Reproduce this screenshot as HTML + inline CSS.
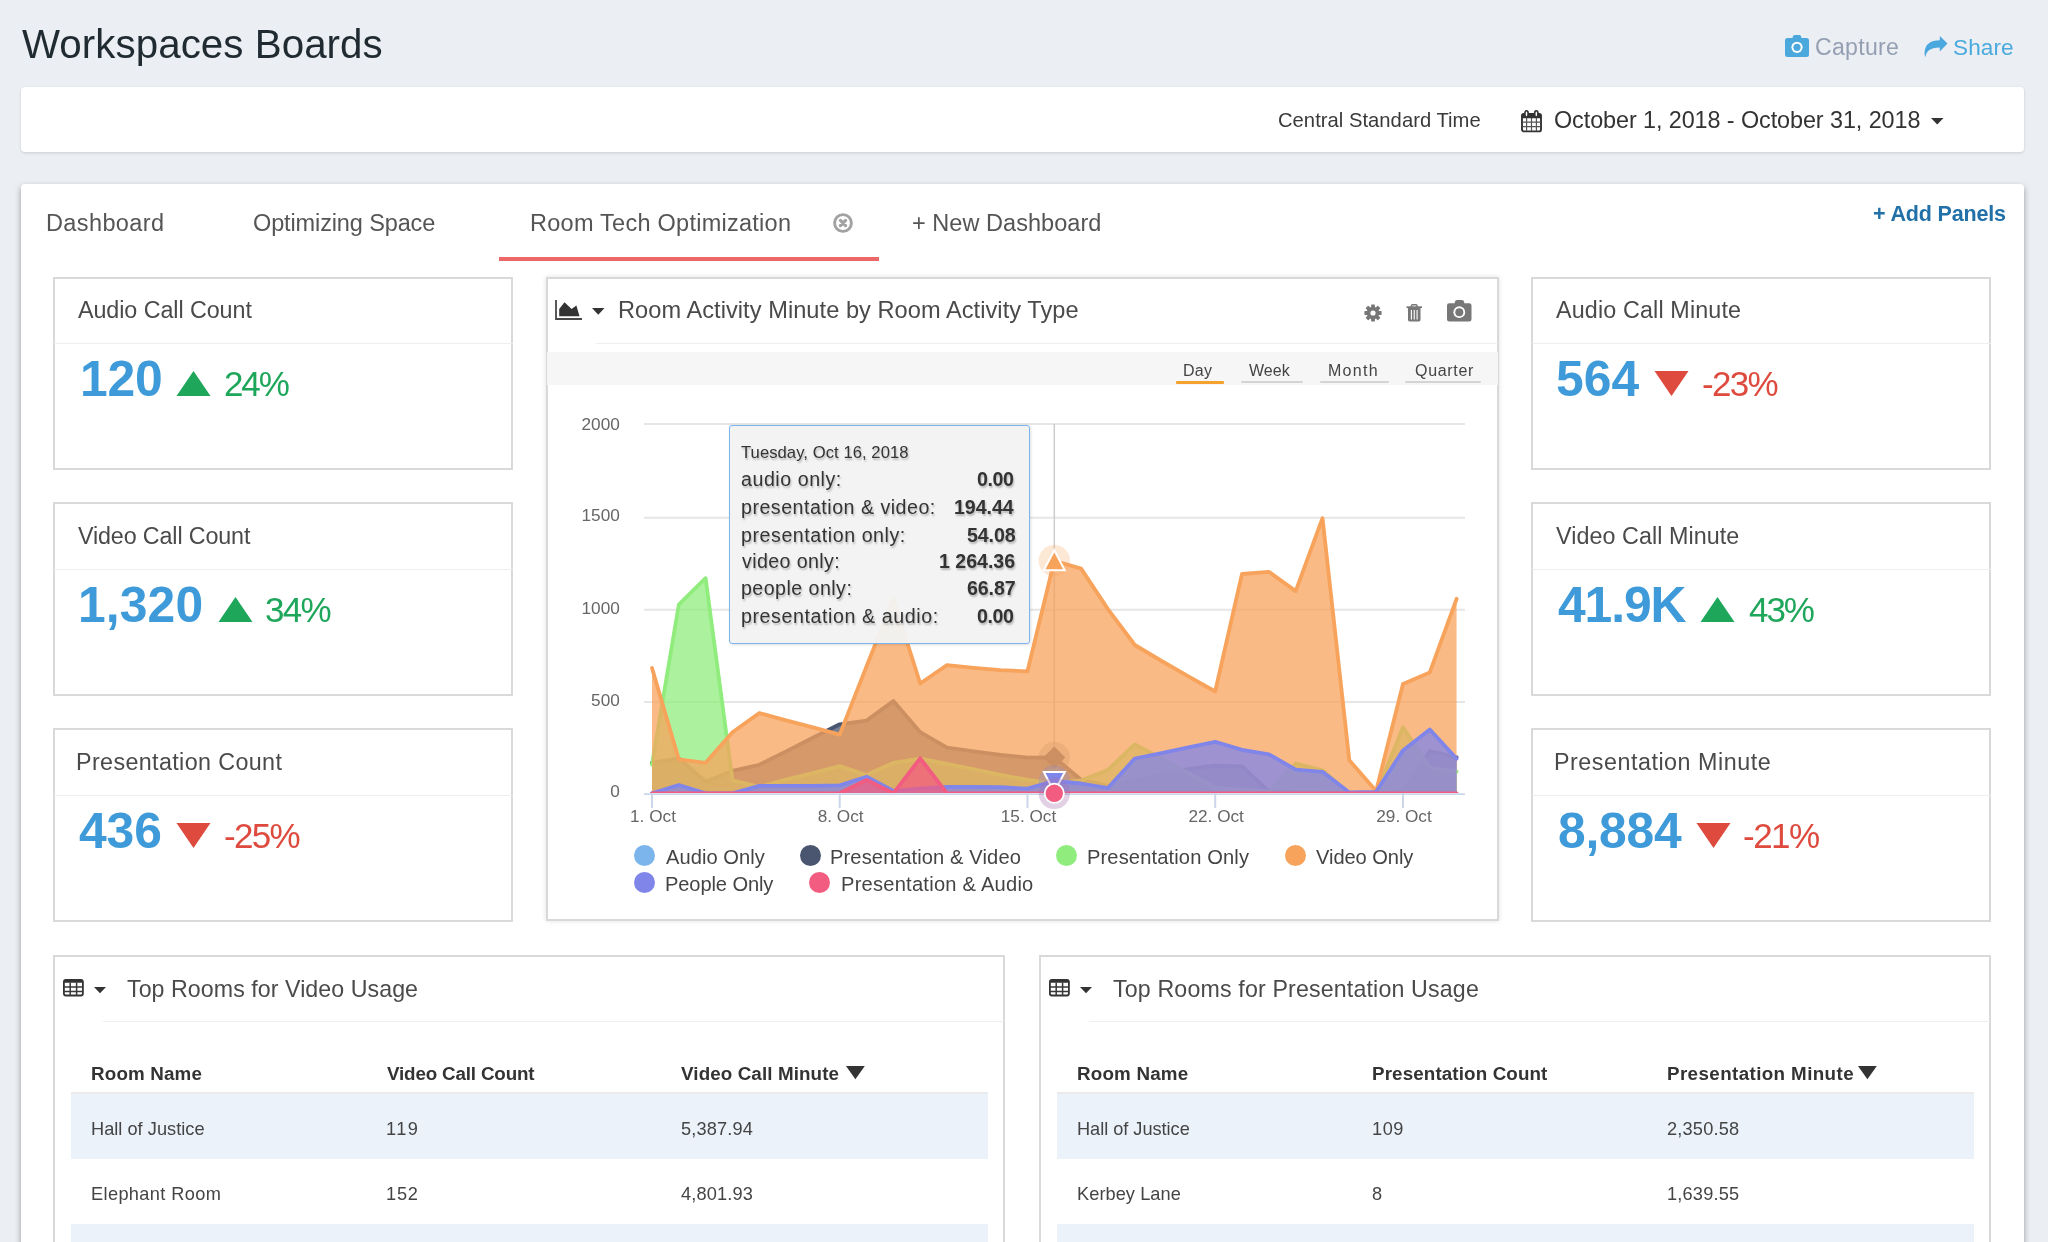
<!DOCTYPE html><html><head><meta charset="utf-8"><title>Workspaces Boards</title>
<style>
html,body{margin:0;padding:0;}
body{width:2048px;height:1242px;overflow:hidden;background:#ebeef3;position:relative;font-family:"Liberation Sans",sans-serif;}
.t{position:absolute;white-space:nowrap;will-change:transform;}
.b{position:absolute;box-sizing:border-box;}
svg{position:absolute;overflow:visible;}
</style></head><body>

<div class="t " style="left:22.10px;top:24.68px;font-size:40.3px;line-height:40.3px;color:#1f2b31;letter-spacing:0.053px;">Workspaces Boards</div>
<svg style="left:1785px;top:35px" width="24" height="22" viewBox="0 0 24 22">
<path d="M8 1.2 Q8.5 0 10 0 H14 Q15.5 0 16 1.2 L16.6 3 H21.5 Q24 3 24 5.5 V19.5 Q24 22 21.5 22 H2.5 Q0 22 0 19.5 V5.5 Q0 3 2.5 3 H7.4 Z" fill="#4aa8dc"/>
<circle cx="12" cy="12.3" r="5.6" fill="#fff"/><circle cx="12" cy="12.3" r="3.6" fill="#4aa8dc"/></svg>
<div class="t " style="left:1814.94px;top:35.52px;font-size:23.1px;line-height:23.1px;color:#959fb2;letter-spacing:0.295px;">Capture</div>
<svg style="left:1924px;top:36px" width="24" height="21" viewBox="0 0 24 21">
<path d="M23.5 7.6 L15.8 0 V4.3 C6 4.3 1 8.6 0.6 16.5 C0.5 18.5 1 20 1.6 21 C2 16 5.5 11.6 15.8 11.6 V15.6 Z" fill="#4aa8de"/></svg>
<div class="t " style="left:1953.20px;top:36.88px;font-size:22.6px;line-height:22.6px;color:#4aaade;letter-spacing:0.075px;">Share</div>
<div class="b" style="left:21px;top:87px;width:2003px;height:64.5px;background:#fff;border-radius:4px;box-shadow:0 1px 3px rgba(0,0,0,0.14);"></div>
<div class="t " style="left:1278.48px;top:110.18px;font-size:20.2px;line-height:20.2px;color:#3a3a3a;letter-spacing:0.034px;">Central Standard Time</div>
<svg style="left:1521px;top:109.5px" width="22" height="24" viewBox="0 0 22 24">
<rect x="1" y="3.9" width="19" height="17.5" rx="2" fill="none" stroke="#333" stroke-width="1.9"/>
<rect x="0.5" y="3.4" width="20" height="4.8" rx="1.6" fill="#333"/>
<path d="M5.6 8 V21 M10.5 8 V21 M15.4 8 V21 M1.5 12.2 H19.5 M1.5 16.7 H19.5" stroke="#555" stroke-width="1.2"/>
<ellipse cx="5.5" cy="3.5" rx="2.5" ry="3.4" fill="#333"/><ellipse cx="15.3" cy="3.5" rx="2.5" ry="3.4" fill="#333"/>
<ellipse cx="5.5" cy="3.9" rx="0.8" ry="2.3" fill="#fff"/><ellipse cx="15.3" cy="3.9" rx="0.8" ry="2.3" fill="#fff"/></svg>
<div class="t " style="left:1553.84px;top:108.63px;font-size:23.4px;line-height:23.4px;color:#333;letter-spacing:-0.087px;">October 1, 2018 - October 31, 2018</div>
<svg style="left:1931px;top:117.5px" width="13" height="8" viewBox="0 0 13 8"><path d="M0 0 H12.5 L6.25 6.6 Z" fill="#333"/></svg>
<div class="b" style="left:21px;top:184px;width:2003px;height:1116px;background:#fff;border-radius:4px;box-shadow:0 3px 6px rgba(0,0,0,0.36);"></div>
<div class="t " style="left:46.40px;top:212.04px;font-size:23.5px;line-height:23.5px;color:#555;letter-spacing:0.384px;">Dashboard</div>
<div class="t " style="left:253.20px;top:212.04px;font-size:23.5px;line-height:23.5px;color:#555;letter-spacing:-0.124px;">Optimizing Space</div>
<div class="t " style="left:530.32px;top:212.04px;font-size:23.5px;line-height:23.5px;color:#555;letter-spacing:0.258px;">Room Tech Optimization</div>
<svg style="left:832px;top:212px" width="22" height="22" viewBox="0 0 22 22">
<circle cx="11" cy="11" r="8.4" fill="none" stroke="#a2a2a2" stroke-width="2.9"/>
<path d="M8.4 8.4 L13.6 13.6 M13.6 8.4 L8.4 13.6" stroke="#a2a2a2" stroke-width="3.2" stroke-linecap="round"/></svg>
<div class="t " style="left:911.94px;top:212.04px;font-size:23.5px;line-height:23.5px;color:#555;letter-spacing:0.043px;">+ New Dashboard</div>
<div class="b" style="left:499px;top:257px;width:379.5px;height:4.300000000000011px;background:#ec6868;"></div>
<div class="t " style="left:1872.84px;top:203.96px;font-size:21.5px;line-height:21.5px;color:#2270a8;font-weight:700;letter-spacing:-0.159px;">+ Add Panels</div>
<div class="b" style="left:53px;top:276.6px;width:460.20000000000005px;height:193.3px;border:2px solid #d9d9d9;background:#fff;"></div>
<div class="b" style="left:54px;top:343px;width:459px;height:1px;background:#eeeeee;"></div>
<div class="t " style="left:77.64px;top:299.21px;font-size:23.3px;line-height:23.3px;color:#4a4a4a;letter-spacing:-0.064px;">Audio Call Count</div>
<div class="t " style="left:79.70px;top:354.85px;font-size:49.8px;line-height:49.8px;color:#3e9ad8;font-weight:700;letter-spacing:-0.15px;">120</div>
<svg style="left:176px;top:371px" width="35" height="26" viewBox="0 0 35 26"><path d="M17.5 0 L34.5 25 H0.5 Z" fill="#1ea65b"/></svg>
<div class="t " style="left:223.94px;top:366.21px;font-size:35.0px;line-height:35.0px;color:#1ea65b;letter-spacing:-2.095px;">24%</div>
<div class="b" style="left:53px;top:502.3px;width:460.20000000000005px;height:193.3px;border:2px solid #d9d9d9;background:#fff;"></div>
<div class="b" style="left:54px;top:569px;width:459px;height:1px;background:#eeeeee;"></div>
<div class="t " style="left:77.64px;top:525.21px;font-size:23.3px;line-height:23.3px;color:#4a4a4a;letter-spacing:-0.134px;">Video Call Count</div>
<div class="t " style="left:78.26px;top:580.85px;font-size:49.8px;line-height:49.8px;color:#3e9ad8;font-weight:700;letter-spacing:0.12px;">1,320</div>
<svg style="left:218px;top:597px" width="35" height="26" viewBox="0 0 35 26"><path d="M17.5 0 L34.5 25 H0.5 Z" fill="#1ea65b"/></svg>
<div class="t " style="left:265.12px;top:592.21px;font-size:35.0px;line-height:35.0px;color:#1ea65b;letter-spacing:-1.685px;">34%</div>
<div class="b" style="left:53px;top:728.3px;width:460.20000000000005px;height:193.29999999999995px;border:2px solid #d9d9d9;background:#fff;"></div>
<div class="b" style="left:54px;top:795px;width:459px;height:1px;background:#eeeeee;"></div>
<div class="t " style="left:76.04px;top:751.21px;font-size:23.3px;line-height:23.3px;color:#4a4a4a;letter-spacing:0.378px;">Presentation Count</div>
<div class="t " style="left:79.46px;top:806.85px;font-size:49.8px;line-height:49.8px;color:#3e9ad8;font-weight:700;letter-spacing:-0.07px;">436</div>
<svg style="left:176px;top:823px" width="35" height="26" viewBox="0 0 35 26"><path d="M0.5 0 H34.5 L17.5 25 Z" fill="#de4a3e"/></svg>
<div class="t " style="left:224.20px;top:818.21px;font-size:35.0px;line-height:35.0px;color:#de4a3e;letter-spacing:-1.7px;">-25%</div>
<div class="b" style="left:1531px;top:276.6px;width:460.20000000000005px;height:193.3px;border:2px solid #d9d9d9;background:#fff;"></div>
<div class="b" style="left:1532px;top:343px;width:459px;height:1px;background:#eeeeee;"></div>
<div class="t " style="left:1555.64px;top:299.21px;font-size:23.3px;line-height:23.3px;color:#4a4a4a;letter-spacing:0.155px;">Audio Call Minute</div>
<div class="t " style="left:1556.40px;top:354.85px;font-size:49.8px;line-height:49.8px;color:#3e9ad8;font-weight:700;letter-spacing:0.06px;">564</div>
<svg style="left:1654px;top:371px" width="35" height="26" viewBox="0 0 35 26"><path d="M0.5 0 H34.5 L17.5 25 Z" fill="#de4a3e"/></svg>
<div class="t " style="left:1702.20px;top:366.21px;font-size:35.0px;line-height:35.0px;color:#de4a3e;letter-spacing:-1.7px;">-23%</div>
<div class="b" style="left:1531px;top:502.3px;width:460.20000000000005px;height:193.3px;border:2px solid #d9d9d9;background:#fff;"></div>
<div class="b" style="left:1532px;top:569px;width:459px;height:1px;background:#eeeeee;"></div>
<div class="t " style="left:1555.64px;top:525.21px;font-size:23.3px;line-height:23.3px;color:#4a4a4a;letter-spacing:0.066px;">Video Call Minute</div>
<div class="t " style="left:1558.00px;top:580.85px;font-size:49.8px;line-height:49.8px;color:#3e9ad8;font-weight:700;letter-spacing:-1.075px;">41.9K</div>
<svg style="left:1700px;top:597px" width="35" height="26" viewBox="0 0 35 26"><path d="M17.5 0 L34.5 25 H0.5 Z" fill="#1ea65b"/></svg>
<div class="t " style="left:1748.54px;top:592.21px;font-size:35.0px;line-height:35.0px;color:#1ea65b;letter-spacing:-2.085px;">43%</div>
<div class="b" style="left:1531px;top:728.3px;width:460.20000000000005px;height:193.29999999999995px;border:2px solid #d9d9d9;background:#fff;"></div>
<div class="b" style="left:1532px;top:795px;width:459px;height:1px;background:#eeeeee;"></div>
<div class="t " style="left:1554.04px;top:751.21px;font-size:23.3px;line-height:23.3px;color:#4a4a4a;letter-spacing:0.523px;">Presentation Minute</div>
<div class="t " style="left:1557.56px;top:806.85px;font-size:49.8px;line-height:49.8px;color:#3e9ad8;font-weight:700;letter-spacing:-0.245px;">8,884</div>
<svg style="left:1696px;top:823px" width="35" height="26" viewBox="0 0 35 26"><path d="M0.5 0 H34.5 L17.5 25 Z" fill="#de4a3e"/></svg>
<div class="t " style="left:1742.94px;top:818.21px;font-size:35.0px;line-height:35.0px;color:#de4a3e;letter-spacing:-1.52px;">-21%</div>
<div class="b" style="left:545.8px;top:276.6px;width:952.8px;height:644.6999999999999px;border:2px solid #d9d9d9;background:#fff;box-shadow:0 0 5px rgba(0,0,0,0.12);"></div>
<svg style="left:555px;top:300px" width="27" height="20" viewBox="0 0 27 20">
<path d="M1 0 V19 H27" fill="none" stroke="#484848" stroke-width="1.8"/>
<path d="M4.2 16.2 V9 L9.5 2.3 L16.6 9 L21.4 5.5 L24.5 16.2 Z" fill="#333"/></svg>
<svg style="left:591.5px;top:308px" width="13" height="8" viewBox="0 0 13 8"><path d="M0 0 H12.5 L6.25 6.8 Z" fill="#333"/></svg>
<div class="t " style="left:618.14px;top:299.18px;font-size:23.6px;line-height:23.6px;color:#4a4a4a;letter-spacing:0.051px;">Room Activity Minute by Room Activity Type</div>
<svg style="left:1364px;top:304px" width="18" height="18" viewBox="-9 -9 18 18">
<g fill="#777"><circle r="6.2"/><rect x="-1.9" y="-8.6" width="3.8" height="4" rx="0.6" transform="rotate(0)"/><rect x="-1.9" y="-8.6" width="3.8" height="4" rx="0.6" transform="rotate(45)"/><rect x="-1.9" y="-8.6" width="3.8" height="4" rx="0.6" transform="rotate(90)"/><rect x="-1.9" y="-8.6" width="3.8" height="4" rx="0.6" transform="rotate(135)"/><rect x="-1.9" y="-8.6" width="3.8" height="4" rx="0.6" transform="rotate(180)"/><rect x="-1.9" y="-8.6" width="3.8" height="4" rx="0.6" transform="rotate(225)"/><rect x="-1.9" y="-8.6" width="3.8" height="4" rx="0.6" transform="rotate(270)"/><rect x="-1.9" y="-8.6" width="3.8" height="4" rx="0.6" transform="rotate(315)"/></g><circle r="2.6" fill="#fff"/></svg>
<svg style="left:1406px;top:304px" width="17" height="18" viewBox="0 0 17 18">
<path d="M0.5 3.2 H16 " stroke="#777" stroke-width="1.8"/><path d="M5.5 3 V1.8 Q5.5 0.8 6.5 0.8 H10 Q11 0.8 11 1.8 V3" fill="none" stroke="#777" stroke-width="1.5"/>
<path d="M2 4 H14.5 V15.8 Q14.5 17.4 13 17.4 H3.5 Q2 17.4 2 15.8 Z" fill="#777"/>
<path d="M5.4 6 V15.4 M8.25 6 V15.4 M11.1 6 V15.4" stroke="#fff" stroke-width="1.1"/></svg>
<svg style="left:1447px;top:300px" width="25" height="22" viewBox="0 0 25 22">
<path d="M8 1.6 Q8.3 0 10 0 H15 Q16.7 0 17 1.6 L17.3 3.2 H22.3 Q24.5 3.2 24.5 5.4 V19.2 Q24.5 21.4 22.3 21.4 H2.2 Q0 21.4 0 19.2 V5.4 Q0 3.2 2.2 3.2 H7.7 Z" fill="#777"/>
<circle cx="12.3" cy="12.2" r="5.9" fill="#fff"/><circle cx="12.3" cy="12.2" r="4.0" fill="#777"/></svg>
<div class="b" style="left:596px;top:342.5px;width:902px;height:1.0px;background:#eeeeee;"></div>
<div class="b" style="left:547.4px;top:352px;width:950.1999999999999px;height:32.5px;background:#f6f6f6;"></div>
<div class="t " style="left:1183.48px;top:363.03px;font-size:16.0px;line-height:16.0px;color:#444;letter-spacing:0.265px;">Day</div>
<div class="b" style="left:1175.8px;top:381px;width:48.40000000000009px;height:3.1999999999999886px;background:#f5a12d;border-radius:1px;"></div>
<div class="t " style="left:1249.46px;top:363.03px;font-size:16.0px;line-height:16.0px;color:#444;letter-spacing:0.026px;">Week</div>
<div class="b" style="left:1240.6px;top:381px;width:62.600000000000136px;height:1.8000000000000114px;background:#d4d4d4;border-radius:1px;"></div>
<div class="t " style="left:1327.56px;top:363.03px;font-size:16.0px;line-height:16.0px;color:#444;letter-spacing:1.287px;">Month</div>
<div class="b" style="left:1319.6px;top:381px;width:69.30000000000018px;height:1.8000000000000114px;background:#d4d4d4;border-radius:1px;"></div>
<div class="t " style="left:1414.72px;top:363.03px;font-size:16.0px;line-height:16.0px;color:#444;letter-spacing:0.685px;">Quarter</div>
<div class="b" style="left:1405.2px;top:381px;width:75.79999999999995px;height:1.8000000000000114px;background:#d4d4d4;border-radius:1px;"></div>
<svg style="left:0;top:0" width="2048" height="1242" viewBox="0 0 2048 1242">
<path d="M644 424.0 H1465" stroke="#e6e6e6" stroke-width="2"/>
<path d="M644 517.8 H1465" stroke="#e6e6e6" stroke-width="2"/>
<path d="M644 609.7 H1465" stroke="#e6e6e6" stroke-width="2"/>
<path d="M644 701.9 H1465" stroke="#e6e6e6" stroke-width="2"/>
<text x="619.8" y="429.8" font-size="17.2" fill="#666" text-anchor="end" font-family="Liberation Sans">2000</text>
<text x="619.8" y="521.3" font-size="17.2" fill="#666" text-anchor="end" font-family="Liberation Sans">1500</text>
<text x="619.8" y="613.6" font-size="17.2" fill="#666" text-anchor="end" font-family="Liberation Sans">1000</text>
<text x="619.8" y="705.5" font-size="17.2" fill="#666" text-anchor="end" font-family="Liberation Sans">500</text>
<text x="619.8" y="797.3" font-size="17.2" fill="#666" text-anchor="end" font-family="Liberation Sans">0</text>
<defs><clipPath id="pc"><rect x="640" y="380" width="830" height="413.0"/></clipPath></defs>
<path d="M644 794.1 H1465" stroke="#ccd6eb" stroke-width="1.8"/>
<path d="M1054.3 424 V792" stroke="#cccccc" stroke-width="1.5"/>
<g clip-path="url(#pc)"><path d="M652.0 793.3 L652.0 793.3 L678.8 793.3 L705.6 793.3 L732.5 793.3 L759.3 793.3 L786.1 793.3 L812.9 793.3 L839.7 793.3 L866.6 793.3 L893.4 793.3 L920.2 793.3 L947.0 793.3 L973.8 793.3 L1000.7 793.3 L1027.5 793.3 L1054.3 793.3 L1081.1 793.3 L1107.9 793.3 L1134.8 793.3 L1161.6 793.3 L1188.4 793.3 L1215.2 793.3 L1242.0 793.3 L1268.9 793.3 L1295.7 793.3 L1322.5 793.3 L1349.3 793.3 L1376.1 793.3 L1403.0 793.3 L1429.8 793.3 L1456.6 793.3 L1456.6 793.3 Z" fill="#7cb5ec" fill-opacity="0.75"/>
<path d="M652.0 793.3 L678.8 793.3 L705.6 793.3 L732.5 793.3 L759.3 793.3 L786.1 793.3 L812.9 793.3 L839.7 793.3 L866.6 793.3 L893.4 793.3 L920.2 793.3 L947.0 793.3 L973.8 793.3 L1000.7 793.3 L1027.5 793.3 L1054.3 793.3 L1081.1 793.3 L1107.9 793.3 L1134.8 793.3 L1161.6 793.3 L1188.4 793.3 L1215.2 793.3 L1242.0 793.3 L1268.9 793.3 L1295.7 793.3 L1322.5 793.3 L1349.3 793.3 L1376.1 793.3 L1403.0 793.3 L1429.8 793.3 L1456.6 793.3" fill="none" stroke="#7cb5ec" stroke-width="3.8" stroke-linejoin="round" stroke-linecap="round"/></g>
<g clip-path="url(#pc)"><path d="M652.0 793.3 L652.0 762.6 L678.8 758.3 L705.6 781.7 L732.5 770.9 L759.3 764.8 L786.1 751.5 L812.9 737.7 L839.7 724.3 L866.6 720.6 L893.4 701.1 L920.2 732.2 L947.0 747.7 L973.8 751.3 L1000.7 754.8 L1027.5 757.6 L1054.3 757.5 L1081.1 779.7 L1107.9 785.9 L1134.8 780.4 L1161.6 774.9 L1188.4 769.0 L1215.2 765.7 L1242.0 766.3 L1268.9 791.5 L1295.7 792.4 L1322.5 792.4 L1349.3 793.3 L1376.1 793.3 L1403.0 791.5 L1429.8 751.0 L1456.6 757.4 L1456.6 793.3 Z" fill="#4a5670" fill-opacity="0.75"/>
<path d="M652.0 762.6 L678.8 758.3 L705.6 781.7 L732.5 770.9 L759.3 764.8 L786.1 751.5 L812.9 737.7 L839.7 724.3 L866.6 720.6 L893.4 701.1 L920.2 732.2 L947.0 747.7 L973.8 751.3 L1000.7 754.8 L1027.5 757.6 L1054.3 757.5 L1081.1 779.7 L1107.9 785.9 L1134.8 780.4 L1161.6 774.9 L1188.4 769.0 L1215.2 765.7 L1242.0 766.3 L1268.9 791.5 L1295.7 792.4 L1322.5 792.4 L1349.3 793.3 L1376.1 793.3 L1403.0 791.5 L1429.8 751.0 L1456.6 757.4" fill="none" stroke="#4a5670" stroke-width="3.8" stroke-linejoin="round" stroke-linecap="round"/></g>
<circle cx="1054.3" cy="757.5" r="15.7" fill="#4a5670" fill-opacity="0.25"/>
<path d="M1054.3 746.5 L1065.3 757.5 L1054.3 768.5 L1043.3 757.5 Z" fill="#4a5670"/>
<g clip-path="url(#pc)"><path d="M652.0 793.3 L652.0 764.6 L678.8 604.7 L705.6 578.2 L732.5 780.4 L759.3 786.9 L786.1 779.5 L812.9 773.1 L839.7 766.1 L866.6 775.1 L893.4 762.8 L920.2 758.7 L947.0 763.9 L973.8 769.4 L1000.7 774.9 L1027.5 779.9 L1054.3 783.3 L1081.1 780.4 L1107.9 769.9 L1134.8 744.4 L1161.6 758.7 L1188.4 773.1 L1215.2 787.6 L1242.0 789.6 L1268.9 791.5 L1295.7 763.5 L1322.5 770.3 L1349.3 793.3 L1376.1 793.3 L1403.0 727.4 L1429.8 767.7 L1456.6 771.6 L1456.6 793.3 Z" fill="#90ed7d" fill-opacity="0.75"/>
<path d="M652.0 764.6 L678.8 604.7 L705.6 578.2 L732.5 780.4 L759.3 786.9 L786.1 779.5 L812.9 773.1 L839.7 766.1 L866.6 775.1 L893.4 762.8 L920.2 758.7 L947.0 763.9 L973.8 769.4 L1000.7 774.9 L1027.5 779.9 L1054.3 783.3 L1081.1 780.4 L1107.9 769.9 L1134.8 744.4 L1161.6 758.7 L1188.4 773.1 L1215.2 787.6 L1242.0 789.6 L1268.9 791.5 L1295.7 763.5 L1322.5 770.3 L1349.3 793.3 L1376.1 793.3 L1403.0 727.4 L1429.8 767.7 L1456.6 771.6" fill="none" stroke="#90ed7d" stroke-width="3.8" stroke-linejoin="round" stroke-linecap="round"/></g>
<circle cx="1054.3" cy="783.3" r="15.7" fill="#90ed7d" fill-opacity="0.25"/>
<g clip-path="url(#pc)"><path d="M652.0 793.3 L652.0 668.0 L678.8 759.4 L705.6 762.8 L732.5 732.2 L759.3 713.1 L786.1 720.3 L812.9 727.4 L839.7 734.6 L866.6 666.3 L893.4 599.0 L920.2 683.5 L947.0 665.1 L973.8 667.8 L1000.7 670.2 L1027.5 671.3 L1054.3 560.7 L1081.1 568.6 L1107.9 609.1 L1134.8 645.0 L1161.6 661.0 L1188.4 676.3 L1215.2 691.5 L1242.0 574.0 L1268.9 571.8 L1295.7 591.1 L1322.5 518.2 L1349.3 760.2 L1376.1 791.1 L1403.0 684.0 L1429.8 672.4 L1456.6 598.8 L1456.6 793.3 Z" fill="#f7a35c" fill-opacity="0.75"/>
<path d="M652.0 668.0 L678.8 759.4 L705.6 762.8 L732.5 732.2 L759.3 713.1 L786.1 720.3 L812.9 727.4 L839.7 734.6 L866.6 666.3 L893.4 599.0 L920.2 683.5 L947.0 665.1 L973.8 667.8 L1000.7 670.2 L1027.5 671.3 L1054.3 560.7 L1081.1 568.6 L1107.9 609.1 L1134.8 645.0 L1161.6 661.0 L1188.4 676.3 L1215.2 691.5 L1242.0 574.0 L1268.9 571.8 L1295.7 591.1 L1322.5 518.2 L1349.3 760.2 L1376.1 791.1 L1403.0 684.0 L1429.8 672.4 L1456.6 598.8" fill="none" stroke="#f7a35c" stroke-width="3.8" stroke-linejoin="round" stroke-linecap="round"/></g>
<circle cx="1054.3" cy="560.7" r="15.7" fill="#f7a35c" fill-opacity="0.25"/>
<path d="M1054.3 550.2 L1064.8 570.2 L1043.8 570.2 Z" fill="#f7a35c" stroke="#fff" stroke-width="2"/>
<g clip-path="url(#pc)"><path d="M652.0 793.3 L652.0 793.3 L678.8 785.0 L705.6 793.3 L732.5 793.3 L759.3 785.9 L786.1 785.9 L812.9 785.9 L839.7 785.4 L866.6 776.7 L893.4 790.9 L920.2 788.7 L947.0 786.9 L973.8 786.9 L1000.7 787.2 L1027.5 788.7 L1054.3 781.0 L1081.1 783.5 L1107.9 788.0 L1134.8 758.5 L1161.6 753.2 L1188.4 747.3 L1215.2 741.8 L1242.0 749.9 L1268.9 754.3 L1295.7 769.6 L1322.5 771.8 L1349.3 792.4 L1376.1 791.8 L1403.0 750.4 L1429.8 729.5 L1456.6 758.7 L1456.6 793.3 Z" fill="#8085e9" fill-opacity="0.75"/>
<path d="M652.0 793.3 L678.8 785.0 L705.6 793.3 L732.5 793.3 L759.3 785.9 L786.1 785.9 L812.9 785.9 L839.7 785.4 L866.6 776.7 L893.4 790.9 L920.2 788.7 L947.0 786.9 L973.8 786.9 L1000.7 787.2 L1027.5 788.7 L1054.3 781.0 L1081.1 783.5 L1107.9 788.0 L1134.8 758.5 L1161.6 753.2 L1188.4 747.3 L1215.2 741.8 L1242.0 749.9 L1268.9 754.3 L1295.7 769.6 L1322.5 771.8 L1349.3 792.4 L1376.1 791.8 L1403.0 750.4 L1429.8 729.5 L1456.6 758.7" fill="none" stroke="#8085e9" stroke-width="3.8" stroke-linejoin="round" stroke-linecap="round"/></g>
<circle cx="1054.3" cy="781.0" r="15.7" fill="#8085e9" fill-opacity="0.25"/>
<path d="M1043.8 772.0 L1064.8 772.0 L1054.3 792.0 Z" fill="#8085e9" stroke="#fff" stroke-width="2"/>
<g clip-path="url(#pc)"><path d="M652.0 793.3 L652.0 793.3 L678.8 793.3 L705.6 793.3 L732.5 793.3 L759.3 793.3 L786.1 793.3 L812.9 793.3 L839.7 793.3 L866.6 779.9 L893.4 793.3 L920.2 758.3 L947.0 793.3 L973.8 793.3 L1000.7 793.3 L1027.5 793.3 L1054.3 793.3 L1081.1 793.3 L1107.9 793.3 L1134.8 793.3 L1161.6 793.3 L1188.4 793.3 L1215.2 793.3 L1242.0 793.3 L1268.9 793.3 L1295.7 793.3 L1322.5 793.3 L1349.3 793.3 L1376.1 793.3 L1403.0 793.3 L1429.8 793.3 L1456.6 793.3 L1456.6 793.3 Z" fill="#f15c80" fill-opacity="0.75"/>
<path d="M652.0 793.3 L678.8 793.3 L705.6 793.3 L732.5 793.3 L759.3 793.3 L786.1 793.3 L812.9 793.3 L839.7 793.3 L866.6 779.9 L893.4 793.3 L920.2 758.3 L947.0 793.3 L973.8 793.3 L1000.7 793.3 L1027.5 793.3 L1054.3 793.3 L1081.1 793.3 L1107.9 793.3 L1134.8 793.3 L1161.6 793.3 L1188.4 793.3 L1215.2 793.3 L1242.0 793.3 L1268.9 793.3 L1295.7 793.3 L1322.5 793.3 L1349.3 793.3 L1376.1 793.3 L1403.0 793.3 L1429.8 793.3 L1456.6 793.3" fill="none" stroke="#f15c80" stroke-width="3.8" stroke-linejoin="round" stroke-linecap="round"/></g>
<circle cx="1054.3" cy="793.3" r="15.7" fill="#a870b0" fill-opacity="0.33"/>
<circle cx="1054.3" cy="793.3" r="9.6" fill="#f15c80" stroke="#fff" stroke-width="1.8"/>
<path d="M652.0 793 V808" stroke="#ccd6eb" stroke-width="2"/>
<text x="653.0" y="822" font-size="17.2" fill="#666" text-anchor="middle" font-family="Liberation Sans">1. Oct</text>
<path d="M839.7 793 V808" stroke="#ccd6eb" stroke-width="2"/>
<text x="840.7" y="822" font-size="17.2" fill="#666" text-anchor="middle" font-family="Liberation Sans">8. Oct</text>
<path d="M1027.5 793 V808" stroke="#ccd6eb" stroke-width="2"/>
<text x="1028.5" y="822" font-size="17.2" fill="#666" text-anchor="middle" font-family="Liberation Sans">15. Oct</text>
<path d="M1215.2 793 V808" stroke="#ccd6eb" stroke-width="2"/>
<text x="1216.2" y="822" font-size="17.2" fill="#666" text-anchor="middle" font-family="Liberation Sans">22. Oct</text>
<path d="M1403.0 793 V808" stroke="#ccd6eb" stroke-width="2"/>
<text x="1404.0" y="822" font-size="17.2" fill="#666" text-anchor="middle" font-family="Liberation Sans">29. Oct</text>
</svg>
<div class="b" style="left:633.8px;top:845.3px;width:21px;height:21px;border-radius:50%;background:#7cb5ec;"></div>
<div class="t " style="left:665.82px;top:847.34px;font-size:20.1px;line-height:20.1px;color:#444;letter-spacing:0.057px;">Audio Only</div>
<div class="b" style="left:799.5px;top:845.3px;width:21px;height:21px;border-radius:50%;background:#4a5670;"></div>
<div class="t " style="left:830.12px;top:847.34px;font-size:20.1px;line-height:20.1px;color:#444;letter-spacing:0.131px;">Presentation &amp; Video</div>
<div class="b" style="left:1056.2px;top:845.3px;width:21px;height:21px;border-radius:50%;background:#90ed7d;"></div>
<div class="t " style="left:1087.48px;top:847.34px;font-size:20.1px;line-height:20.1px;color:#444;letter-spacing:0.139px;">Presentation Only</div>
<div class="b" style="left:1284.5px;top:845.3px;width:21px;height:21px;border-radius:50%;background:#f7a35c;"></div>
<div class="t " style="left:1316.18px;top:847.34px;font-size:20.1px;line-height:20.1px;color:#444;letter-spacing:-0.058px;">Video Only</div>
<div class="b" style="left:633.8px;top:872.3px;width:21px;height:21px;border-radius:50%;background:#8085e9;"></div>
<div class="t " style="left:665.20px;top:874.34px;font-size:20.1px;line-height:20.1px;color:#444;letter-spacing:-0.106px;">People Only</div>
<div class="b" style="left:808.7px;top:872.3px;width:21px;height:21px;border-radius:50%;background:#f15c80;"></div>
<div class="t " style="left:840.56px;top:874.34px;font-size:20.1px;line-height:20.1px;color:#444;letter-spacing:0.242px;">Presentation &amp; Audio</div>
<div class="b" style="left:728.5px;top:424.5px;width:301.5px;height:219.0px;border:1.6px solid #7cb5ec;border-radius:3px;background:rgba(243,243,243,0.96);box-shadow:1px 1px 3px rgba(0,0,0,0.12);"></div>
<div class="t " style="left:741.28px;top:445.24px;font-size:16.6px;line-height:16.6px;color:#333;letter-spacing:0.072px;text-shadow:1px 2px 2px rgba(0,0,0,0.25);">Tuesday, Oct 16, 2018</div>
<div class="t " style="left:741.38px;top:470.26px;font-size:19.6px;line-height:19.6px;color:#333;letter-spacing:0.552px;text-shadow:1px 2px 2px rgba(0,0,0,0.25);">audio only:</div>
<div class="t " style="left:977.46px;top:470.26px;font-size:19.6px;line-height:19.6px;color:#333;font-weight:700;letter-spacing:-0.408px;text-shadow:1px 2px 2px rgba(0,0,0,0.25);">0.00</div>
<div class="t " style="left:741.38px;top:497.91px;font-size:19.6px;line-height:19.6px;color:#333;letter-spacing:0.508px;text-shadow:1px 2px 2px rgba(0,0,0,0.25);">presentation &amp; video:</div>
<div class="t " style="left:953.94px;top:497.91px;font-size:19.6px;line-height:19.6px;color:#333;font-weight:700;letter-spacing:-0.062px;text-shadow:1px 2px 2px rgba(0,0,0,0.25);">194.44</div>
<div class="t " style="left:741.38px;top:525.56px;font-size:19.6px;line-height:19.6px;color:#333;letter-spacing:0.565px;text-shadow:1px 2px 2px rgba(0,0,0,0.25);">presentation only:</div>
<div class="t " style="left:966.54px;top:525.56px;font-size:19.6px;line-height:19.6px;color:#333;font-weight:700;letter-spacing:-0.102px;text-shadow:1px 2px 2px rgba(0,0,0,0.25);">54.08</div>
<div class="t " style="left:742.18px;top:552.41px;font-size:19.6px;line-height:19.6px;color:#333;letter-spacing:0.4px;text-shadow:1px 2px 2px rgba(0,0,0,0.25);">video only:</div>
<div class="t " style="left:939.02px;top:552.41px;font-size:19.6px;line-height:19.6px;color:#333;font-weight:700;letter-spacing:-0.018px;text-shadow:1px 2px 2px rgba(0,0,0,0.25);">1 264.36</div>
<div class="t " style="left:741.38px;top:579.26px;font-size:19.6px;line-height:19.6px;color:#333;letter-spacing:0.469px;text-shadow:1px 2px 2px rgba(0,0,0,0.25);">people only:</div>
<div class="t " style="left:966.54px;top:579.26px;font-size:19.6px;line-height:19.6px;color:#333;font-weight:700;letter-spacing:-0.102px;text-shadow:1px 2px 2px rgba(0,0,0,0.25);">66.87</div>
<div class="t " style="left:741.38px;top:606.91px;font-size:19.6px;line-height:19.6px;color:#333;letter-spacing:0.598px;text-shadow:1px 2px 2px rgba(0,0,0,0.25);">presentation &amp; audio:</div>
<div class="t " style="left:977.46px;top:606.91px;font-size:19.6px;line-height:19.6px;color:#333;font-weight:700;letter-spacing:-0.408px;text-shadow:1px 2px 2px rgba(0,0,0,0.25);">0.00</div>
<div class="b" style="left:53px;top:954.8px;width:952px;height:345.20000000000005px;border:2px solid #d9d9d9;background:#fff;"></div>
<svg style="left:63px;top:979px" width="22" height="18" viewBox="0 0 22 18">
<rect x="0.9" y="0.9" width="19" height="15.6" rx="2" fill="none" stroke="#333" stroke-width="1.8"/>
<rect x="0.9" y="0.9" width="19" height="2.8" rx="1" fill="#333"/>
<path d="M7.2 3.5 V16.5 M13.6 3.5 V16.5 M1 8 H20 M1 12.5 H20" stroke="#383838" stroke-width="1.5"/></svg>
<svg style="left:94px;top:987px" width="13" height="8" viewBox="0 0 13 8"><path d="M0 0 H12 L6 6.2 Z" fill="#333"/></svg>
<div class="t " style="left:126.54px;top:977.80px;font-size:23.2px;line-height:23.2px;color:#4a4a4a;letter-spacing:0.06px;">Top Rooms for Video Usage</div>
<div class="b" style="left:103px;top:1021px;width:901px;height:1px;background:#eeeeee;"></div>
<div class="t " style="left:91.30px;top:1064.96px;font-size:18.8px;line-height:18.8px;color:#333;font-weight:700;letter-spacing:0.17px;">Room Name</div>
<div class="t " style="left:387.18px;top:1064.96px;font-size:18.8px;line-height:18.8px;color:#333;font-weight:700;letter-spacing:-0.157px;">Video Call Count</div>
<div class="t " style="left:681.46px;top:1064.96px;font-size:18.8px;line-height:18.8px;color:#333;font-weight:700;letter-spacing:0.114px;">Video Call Minute</div>
<div class="b" style="left:71px;top:1092px;width:917px;height:2px;background:#ebebeb;"></div>
<div class="b" style="left:71px;top:1094px;width:917px;height:65px;background:#ebf2fa;"></div>
<div class="b" style="left:71px;top:1224px;width:917px;height:76px;background:#ebf2fa;"></div>
<div class="t " style="left:91.30px;top:1120.45px;font-size:18.2px;line-height:18.2px;color:#444;letter-spacing:0.021px;">Hall of Justice</div>
<div class="t " style="left:386.38px;top:1120.45px;font-size:18.2px;line-height:18.2px;color:#444;letter-spacing:1.48px;">119</div>
<div class="t " style="left:680.66px;top:1120.45px;font-size:18.2px;line-height:18.2px;color:#444;letter-spacing:0.159px;">5,387.94</div>
<div class="t " style="left:91.30px;top:1185.03px;font-size:18.2px;line-height:18.2px;color:#444;letter-spacing:0.368px;">Elephant Room</div>
<div class="t " style="left:386.38px;top:1185.03px;font-size:18.2px;line-height:18.2px;color:#444;letter-spacing:0.805px;">152</div>
<div class="t " style="left:681.46px;top:1185.03px;font-size:18.2px;line-height:18.2px;color:#444;letter-spacing:0.16px;">4,801.93</div>
<svg style="left:845.5px;top:1065.5px" width="19" height="14" viewBox="0 0 19 14"><path d="M0 0 H18.8 L9.4 13.3 Z" fill="#333"/></svg>
<div class="b" style="left:1039px;top:954.8px;width:952px;height:345.20000000000005px;border:2px solid #d9d9d9;background:#fff;"></div>
<svg style="left:1049px;top:979px" width="22" height="18" viewBox="0 0 22 18">
<rect x="0.9" y="0.9" width="19" height="15.6" rx="2" fill="none" stroke="#333" stroke-width="1.8"/>
<rect x="0.9" y="0.9" width="19" height="2.8" rx="1" fill="#333"/>
<path d="M7.2 3.5 V16.5 M13.6 3.5 V16.5 M1 8 H20 M1 12.5 H20" stroke="#383838" stroke-width="1.5"/></svg>
<svg style="left:1080px;top:987px" width="13" height="8" viewBox="0 0 13 8"><path d="M0 0 H12 L6 6.2 Z" fill="#333"/></svg>
<div class="t " style="left:1112.54px;top:977.80px;font-size:23.2px;line-height:23.2px;color:#4a4a4a;letter-spacing:0.158px;">Top Rooms for Presentation Usage</div>
<div class="b" style="left:1089px;top:1021px;width:901px;height:1px;background:#eeeeee;"></div>
<div class="t " style="left:1077.30px;top:1064.96px;font-size:18.8px;line-height:18.8px;color:#333;font-weight:700;letter-spacing:0.192px;">Room Name</div>
<div class="t " style="left:1372.38px;top:1064.96px;font-size:18.8px;line-height:18.8px;color:#333;font-weight:700;letter-spacing:0.127px;">Presentation Count</div>
<div class="t " style="left:1666.66px;top:1064.96px;font-size:18.8px;line-height:18.8px;color:#333;font-weight:700;letter-spacing:0.394px;">Presentation Minute</div>
<div class="b" style="left:1057px;top:1092px;width:917px;height:2px;background:#ebebeb;"></div>
<div class="b" style="left:1057px;top:1094px;width:917px;height:65px;background:#ebf2fa;"></div>
<div class="b" style="left:1057px;top:1224px;width:917px;height:76px;background:#ebf2fa;"></div>
<div class="t " style="left:1077.30px;top:1120.45px;font-size:18.2px;line-height:18.2px;color:#444;letter-spacing:-0.032px;">Hall of Justice</div>
<div class="t " style="left:1372.38px;top:1120.45px;font-size:18.2px;line-height:18.2px;color:#444;letter-spacing:0.535px;">109</div>
<div class="t " style="left:1666.66px;top:1120.45px;font-size:18.2px;line-height:18.2px;color:#444;letter-spacing:0.182px;">2,350.58</div>
<div class="t " style="left:1077.30px;top:1185.03px;font-size:18.2px;line-height:18.2px;color:#444;letter-spacing:0.068px;">Kerbey Lane</div>
<div class="t " style="left:1372.38px;top:1185.03px;font-size:18.2px;line-height:18.2px;color:#444;">8</div>
<div class="t " style="left:1666.66px;top:1185.03px;font-size:18.2px;line-height:18.2px;color:#444;letter-spacing:0.183px;">1,639.55</div>
<svg style="left:1858.4px;top:1065.5px" width="19" height="14" viewBox="0 0 19 14"><path d="M0 0 H18.8 L9.4 13.3 Z" fill="#333"/></svg>
</body></html>
